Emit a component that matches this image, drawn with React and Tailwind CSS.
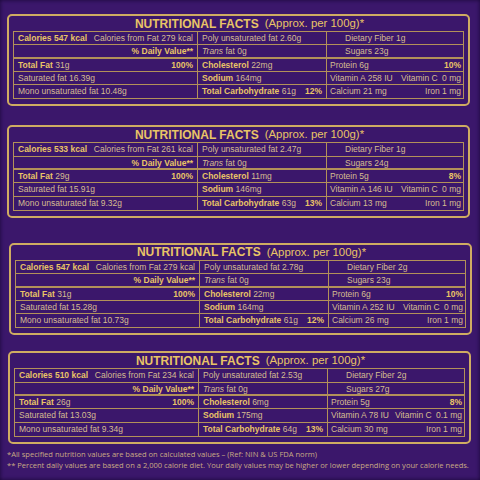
const panels = [
  {
    cls: 'mt-[14px] ml-[7px]',
    kcal: '547', fatKcal: '279', totalFat: '31g', sat: '16.39g', mono: '10.48g',
    poly: '2.60g', chol: '22mg', sodium: '164mg', carb: '61g', carbPct: '12%',
    fiber: '1g', sugars: '23g', protein: '6g', proteinPct: '10%', vitA: '258', vitC: '0 mg', calcium: '21 mg',
  },
  {
    cls: 'mt-[19px] ml-[7px]',
    kcal: '533', fatKcal: '261', totalFat: '29g', sat: '15.91g', mono: '9.32g',
    poly: '2.47g', chol: '11mg', sodium: '146mg', carb: '63g', carbPct: '13%',
    fiber: '1g', sugars: '24g', protein: '5g', proteinPct: '8%', vitA: '146', vitC: '0 mg', calcium: '13 mg',
  },
  {
    cls: 'mt-[25px] ml-[9px]',
    kcal: '547', fatKcal: '279', totalFat: '31g', sat: '15.28g', mono: '10.73g',
    poly: '2.78g', chol: '22mg', sodium: '164mg', carb: '61g', carbPct: '12%',
    fiber: '2g', sugars: '23g', protein: '6g', proteinPct: '10%', vitA: '252', vitC: '0 mg', calcium: '26 mg',
  },
  {
    cls: 'mt-[16px] ml-[8px]',
    kcal: '510', fatKcal: '234', totalFat: '26g', sat: '13.03g', mono: '9.34g',
    poly: '2.53g', chol: '6mg', sodium: '175mg', carb: '64g', carbPct: '13%',
    fiber: '2g', sugars: '27g', protein: '5g', proteinPct: '8%', vitA: '78', vitC: '0.1 mg', calcium: '30 mg',
  },
]

const B = 'font-bold text-[#e9c466]'

function Row({ a, b, c, border = 'border-b' }) {
  return (
    <div className={`grid grid-cols-[184px_129px_1fr] h-[13.3px] border-[#b39159] ${border}`}>
      <div className="flex items-center justify-between px-[4px] border-r border-[#b39159] whitespace-nowrap">{a}</div>
      <div className="flex items-center justify-between px-[4px] border-r border-[#b39159] whitespace-nowrap">{b}</div>
      <div className="flex items-center justify-between pl-[3px] pr-[2px] whitespace-nowrap">{c}</div>
    </div>
  )
}

function Panel({ p }) {
  return (
    <div className={`w-[463px] rounded-[5px] border-2 border-[#cfac62] px-[4px] pb-[5px] ${p.cls}`}>
      <div className="h-[15px] flex items-center justify-center pl-[22px] text-[#e9c466] whitespace-nowrap">
        <span className="font-bold text-[12px]">NUTRITIONAL FACTS</span>
        <span className="ml-[6px] text-[11.4px]">(Approx. per 100g)*</span>
      </div>
      <div className="border border-[#b39159] text-[8.5px] text-[#d6bd90]">
        <Row
          a={<><span className={B}>Calories {p.kcal} kcal</span><span>Calories from Fat {p.fatKcal} kcal</span></>}
          b={<span>Poly unsaturated fat {p.poly}</span>}
          c={<span className="pl-[15px]">Dietary Fiber {p.fiber}</span>}
        />
        <Row
          border="border-b-2"
          a={<><span /><span className={B}>% Daily Value**</span></>}
          b={<span><i>Trans</i> fat 0g</span>}
          c={<span className="pl-[15px]">Sugars {p.sugars}</span>}
        />
        <Row
          a={<><span><span className={B}>Total Fat</span> {p.totalFat}</span><span className={B}>100%</span></>}
          b={<span><span className={B}>Cholesterol</span> {p.chol}</span>}
          c={<><span>Protein {p.protein}</span><span className={B}>{p.proteinPct}</span></>}
        />
        <Row
          a={<span>Saturated fat {p.sat}</span>}
          b={<span><span className={B}>Sodium</span> {p.sodium}</span>}
          c={<><span>Vitamin A {p.vitA} IU</span><span>Vitamin C <span className="ml-[2px]">{p.vitC}</span></span></>}
        />
        <Row
          border=""
          a={<span>Mono unsaturated fat {p.mono}</span>}
          b={<><span><span className={B}>Total Carbohydrate</span> {p.carb}</span><span className={B}>{p.carbPct}</span></>}
          c={<><span>Calcium {p.calcium}</span><span>Iron 1 mg</span></>}
        />
      </div>
    </div>
  )
}

export default function App() {
  return (
    <div className="w-[480px] h-[480px] overflow-hidden bg-[#3b176b] shadow-[inset_0_0_4px_rgba(10,0,30,0.7)] font-['Liberation_Sans',Arial,sans-serif] flex flex-col">
      {panels.map((p, i) => (
        <Panel key={i} p={p} />
      ))}
      <div className="mt-[5px] pl-[7px] font-['Open_Sans',sans-serif] text-[7.55px] leading-[11px] text-[#c9ab85] whitespace-nowrap">
        <p>*All specified nutrition values are based on calculated values – (Ref: NIN &amp; US FDA norm)</p>
        <p>** Percent daily values are based on a 2,000 calorie diet. Your daily values may be higher or lower depending on your calorie needs.</p>
      </div>
    </div>
  )
}
